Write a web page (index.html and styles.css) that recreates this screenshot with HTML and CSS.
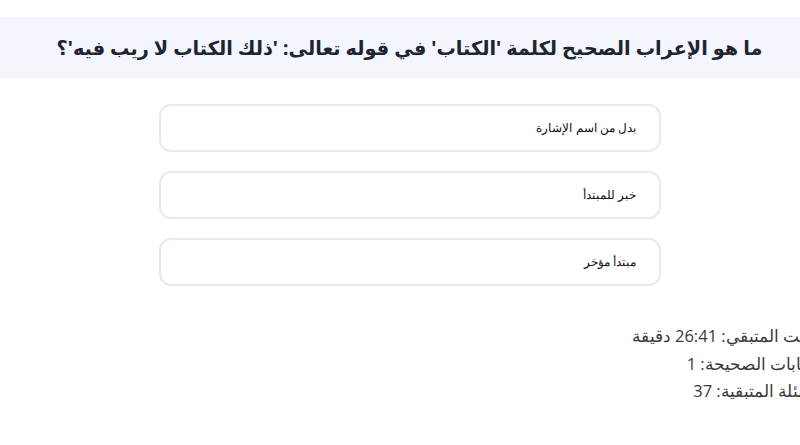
FILE: index.html
```html
<!DOCTYPE html>
<html lang="ar">
<head>
    <meta charset="UTF-8">
    <meta name="viewport" content="width=device-width, initial-scale=1.0">
    <title>اختبار الإعراب</title>
    <link rel="stylesheet" href="styles.css">
</head>
<body>
    <div class="page" dir="rtl">
        <div class="question">
            <h1>ما هو الإعراب الصحيح لكلمة 'الكتاب' في قوله تعالى: 'ذلك الكتاب لا ريب فيه'؟</h1>
        </div>
        <div class="options">
            <button class="option">بدل من اسم الإشارة</button>
            <button class="option">خبر للمبتدأ</button>
            <button class="option">مبتدأ مؤخر</button>
        </div>
        <div class="stats">
            <p>الوقت المتبقي: 26:41 دقيقة</p>
            <p>الإجابات الصحيحة: 1</p>
            <p>الأسئلة المتبقية: 37</p>
        </div>
    </div>
</body>
</html>
```

FILE: styles.css
```css
html, body {
    overflow-x: hidden;
}
body {
    margin: 0;
    padding: 0;
    background-color: #fff;
    font-family: "Noto Sans", "DejaVu Sans", sans-serif;
}
/* страница чуть шире окна, правый край обрезается */
.page {
    width: 819px;
}
.question {
    margin-top: 17px;
    height: 61px;
    background-color: #f3f6fd;
    display: flex;
    align-items: center;
    justify-content: center;
}
.question h1 {
    margin: 0;
    font-size: 19.3px;
    font-weight: bold;
    color: #1f2430;
}
.options {
    width: 502px;
    margin: 26px auto 0;
    display: flex;
    flex-direction: column;
    gap: 19px;
}
.option {
    height: 48px;
    padding: 0 22px;
    background-color: #fff;
    border: 2px solid #e6e9ef;
    border-radius: 12px;
    text-align: right;
    font-family: "Liberation Sans", Arial, sans-serif;
    font-size: 12px;
    font-weight: 500;
    color: #111;
}
.stats {
    margin: 36px -8px 0 0;
    font-family: "Open Sans", sans-serif;
    font-size: 16.5px;
    color: #3a3a3a;
}
.stats p {
    margin: 0;
    line-height: 27.5px;
}
```
